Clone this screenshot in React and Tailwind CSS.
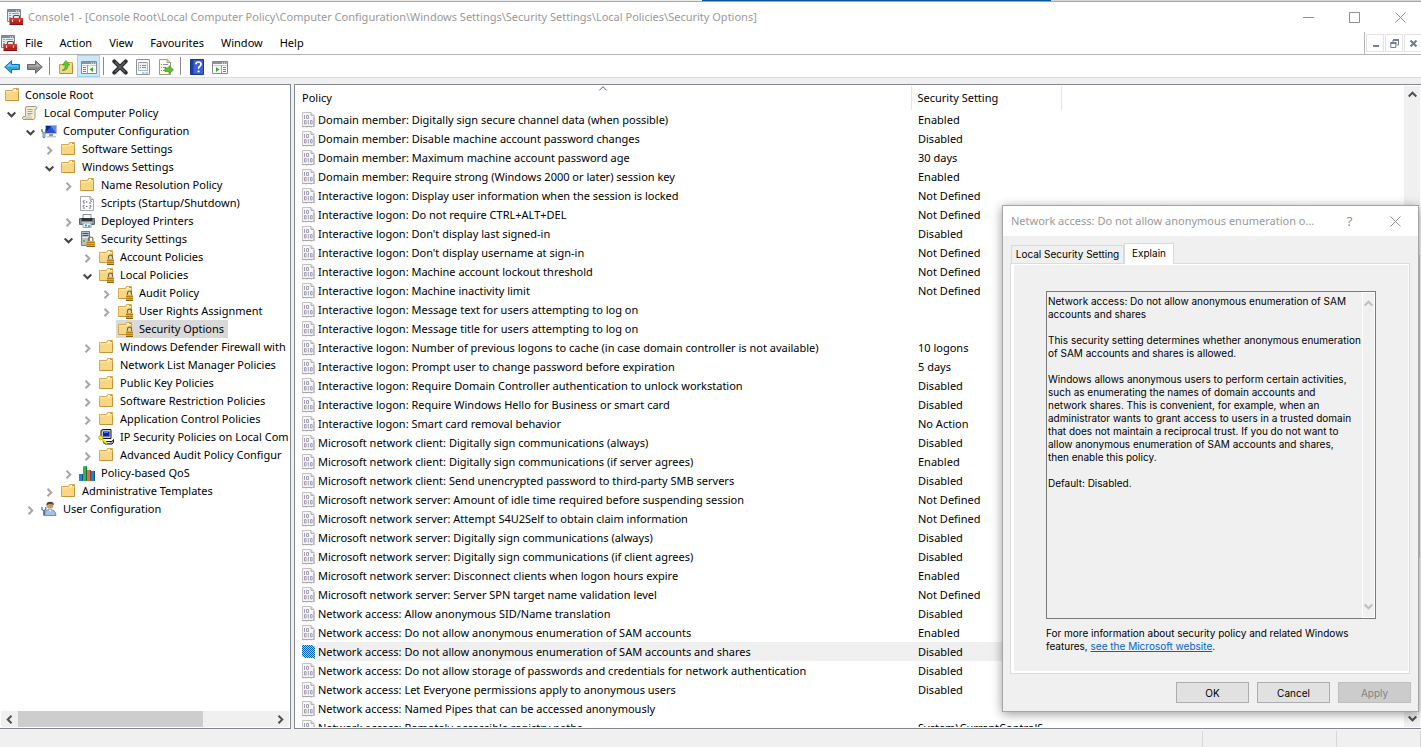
import { useState } from "react";

/* ---------- icons ---------- */

const Svg = ({ children, className = "" }) => (
  <svg viewBox="0 0 16 16" width="16" height="16" aria-hidden="true" className={"block shrink-0 " + className}>
    {children}
  </svg>
);

const ConsoleIcon = () => (
  <Svg>
    <path d="M.5.5h13v12h-13z" fill="#e6eaee" stroke="#7b8794" />
    <path d="M1 1h12v2H1z" fill="#7f8c9a" />
    <path d="M9 2h1M11 2h1" stroke="#fff" />
    <path d="M2 4.500h2M5 4.500h7M2 6.500h2M2 8.500h2" stroke="#8ea0b2" />
    <path d="M6.500 9V7.500q0-1 1-1h4q1 0 1 1V9" fill="none" stroke="#4d5358" strokeWidth="1.200" />
    <path d="M2.500 9H16v6.500H2.500z" fill="#b3221c" />
    <path d="M2.500 9H16v2.500H2.500z" fill="#cf3a32" />
    <path d="M2.500 15.500H16" stroke="#7d120e" />
    <path d="M5.500 10.500v2.500M12.500 10.500v2.500" stroke="#e3dedc" strokeWidth="1.200" />
  </Svg>
);

const FolderIcon = ({ lock }) => (
  <Svg>
    <path d="M1.500 3.500h7l1-2h5v12h-13z" fill="#f7d784" stroke="#d9a94e" />
    <path d="M2 4.500h7l1-2h4v1l-4 1.500-8 .500z" fill="#fdeebb" />
    <path d="M10.500 2.500h2" stroke="#fff" />
    <path d="M12.200 2.500h1.600" stroke="#4a9be0" />
    <path d="M2 13.500h12.500V5" fill="none" stroke="#c69537" />
    {lock && (
      <g>
        <path d="M10.500 10V8.200q0-2 2-2t2 2V10" fill="none" stroke="#6c6a5c" strokeWidth="1.200" />
        <path d="M9 10h7v5.500H9z" fill="#e3ac2a" />
        <path d="M9 11.500h7M9 13.500h7" stroke="#b67d10" />
        <path d="M9 15.500h7" stroke="#8d5e0a" />
      </g>
    )}
  </Svg>
);

const ScrollIcon = () => (
  <Svg>
    <path d="M4 1.500h9.500q1.500 0 1.500 1.500t-2 1.200V12q0 2.500-2 2.500H2q-1.500 0-1.500-1.500T2 11.500h1.500V3Q3.500 1.500 5 1.500" fill="#f3edd6" stroke="#a39c84" />
    <path d="M3 11.500h7v2.500H2.500z" fill="#d9d0b2" />
    <path d="M5.500 4.500h5M5.500 6.500h5M5.500 8.500h5M5.500 10h3" stroke="#97917c" strokeWidth=".8" />
  </Svg>
);

const ComputerIcon = () => (
  <Svg>
    <path d="M4.500 2.500h11v8h-11z" fill="#2c55c8" stroke="#b5bcc6" />
    <path d="M5 3h5l-5 6z" fill="#0a1fa3" />
    <path d="M10 3h5v7l-5-7z" fill="#5c8df0" />
    <path d="M8 11h4v2.500H8z" fill="#8f99a5" />
    <path d="M6 13h9v1.500H6z" fill="#c2c8cf" />
    <path d="M1 6v2.500l1.200 1v4.500q.8 1.500 1.600 0V9.500l1-1V6" fill="none" stroke="#4c6680" strokeWidth="1.200" />
    <path d="M2.300 9.500h1.500v5H2.300z" fill="#8ec5ea" />
  </Svg>
);

const ScriptIcon = () => (
  <Svg>
    <path d="M1.500 1.500H11l3.500 3v11h-13z" fill="#fcfcfc" stroke="#a7a9ad" />
    <path d="M11 1.500v3h3.500" fill="none" stroke="#a7a9ad" />
    <path d="M5.500 5.500Q4 5.500 4 7m7.500-1.500Q13 5.500 12 7M5.500 10.500Q3.500 10.500 4 12m6.500-1.500Q12.500 10.500 12 12M4 8h2M10 8h2M4 13h2M10 13h2" fill="none" stroke="#686b78" />
    <path d="M7 7h1.500M7 11.500h1.500" stroke="#686b78" />
  </Svg>
);

const PrinterIcon = () => (
  <Svg>
    <path d="M4 1.500h8V6H4z" fill="#f7f8f9" stroke="#8d9196" />
    <path d="M.5 5.500h15v6H.5z" fill="#8d9298" stroke="#62676c" />
    <path d="M2.500 5h11v3h-11z" fill="#2f3338" />
    <path d="M3 9.500h10" stroke="#c8ccd0" />
    <path d="M4 10h8v4.500H4z" fill="#e8f4fb" stroke="#9fa8b0" />
    <path d="M6 11.500h2v2H6z" fill="#2f8fd8" />
    <path d="M9 12h2v2H9z" fill="#57b4a6" />
  </Svg>
);

const SecurityIcon = () => (
  <Svg>
    <path d="M2.500.5h8v14h-8z" fill="#b5c2cc" stroke="#71808c" />
    <path d="M3.500 2.500h6M3.500 4.500h6" stroke="#435360" />
    <path d="M3.500 6.500h6" stroke="#e8eef2" />
    <path d="M4 9h2v2H4z" fill="#6fb53e" />
    <path d="M9.500 10V8.200q0-2 2.200-2t2.200 2V10" fill="none" stroke="#857a50" strokeWidth="1.300" />
    <path d="M7.500 10H16v5.500H7.500z" fill="#e7af2b" />
    <path d="M7.500 11.500H16M7.500 13.500H16" stroke="#b57d12" />
    <path d="M7.500 15.500H16" stroke="#8d5e0a" />
  </Svg>
);

const IpSecIcon = () => (
  <Svg>
    <path d="M3 1.500 5 .5h8v9H3z" fill="#c4c7cc" stroke="#17181a" />
    <path d="M5 2.500h6.500v5H5z" fill="#14249a" />
    <path d="M6 3.500h4" stroke="#5d77e8" />
    <path d="M5 12.500h9l1.500-2v3l-1.500 1.500H7z" fill="#a8abb0" stroke="#17181a" />
    <path d="M8 13.500h4" stroke="#eee" />
    <circle cx="2.700" cy="8.800" r="2" fill="#fff200" stroke="#a79a00" strokeWidth=".8" />
    <path d="m4 10 5 4.500" stroke="#f0df00" strokeWidth="1.800" />
    <path d="m6.500 13.500-1.300 1.300" stroke="#d8c600" strokeWidth="1.200" />
  </Svg>
);

const QosIcon = () => (
  <Svg>
    <path d="M0 9h4v7H0z" fill="#1d86d8" />
    <path d="M4 1.500 6 1h2v15H4z" fill="#35b44a" />
    <path d="M8 5h4v11H8z" fill="#ef6a3a" />
    <path d="M12 6h4v10h-4z" fill="#1f7fd0" />
    <path d="M3.500 9v6.500M7.500 2v13.500M11.500 5v10.500M15.500 6v9.500" stroke="#0d2a44" strokeOpacity=".55" />
  </Svg>
);

const UserIcon = () => (
  <Svg>
    <circle cx="9" cy="4.500" r="3.300" fill="#c99a72" />
    <path d="M5.500 4.500Q5 .8 9 .8t3.800 3.200L11 3.200 8 3z" fill="#50443a" />
    <path d="M3.500 14.500Q4 8.500 8.500 8.500q6 0 6.500 6z" fill="#9fc3ea" stroke="#6d90b8" />
    <path d="m8 8.800 1.200 2 1.300-2z" fill="#fff" />
    <path d="M1 6v2.500l1.200 1h1.600l1-1V6" fill="none" stroke="#56718c" strokeWidth="1.200" />
    <path d="M2.200 9.500h1.700v5H2.200z" fill="#3f6c9c" />
  </Svg>
);

const PolicyIcon = () => (
  <svg viewBox="0 0 13 16" width="13" height="16" aria-hidden="true" className="block shrink-0">
    <path d="M.5.500H9l3 3v11.500l-1-.8-1.500.8q-3-1.500-5 0-2-1-4 0z" fill="#f6f6f7" stroke="#c2c2c5" />
    <path d="M9 .5v3h3" fill="#dcdce0" stroke="#b2b2b6" />
    <path d="M2.500 3v4" stroke="#a29fb6" />
    <path d="M4.500 3.500h2v3h-2zM2.500 8.500h1.600v3.500H2.500zM8.500 8.500h1.600v3.500H8.500z" fill="none" stroke="#a29fb6" />
    <path d="M6.300 8v4.500" stroke="#a29fb6" />
    <path d="M.5 14.500h10M12 5v10" stroke="#a9a9ac" />
  </svg>
);

const SelectedPolicyIcon = () => (
  <svg viewBox="0 0 13 16" width="13" height="16" aria-hidden="true" className="block shrink-0">
    <defs>
      <pattern id="check" width="2" height="2" patternUnits="userSpaceOnUse">
        <path d="M0 0h2v2H0z" fill="#b4c4d2" />
        <path d="M0 0h1v1H0zM1 1h1v1H1z" fill="#0067b8" />
      </pattern>
    </defs>
    <path d="M0 1h10l3 2v12l-2-1H3l-3-2z" fill="url(#check)" />
  </svg>
);

const ArrowIcon = ({ flip, fill, stroke, shine }) => (
  <Svg>
    <g transform={flip ? "translate(16 0) scale(-1 1)" : undefined}>
      <path d="M.7 8 7.500 1.800v3.700h8v5h-8v3.700z" fill={fill} stroke={stroke} />
      <path d="M2.500 7.500 6.500 4v2.500h8v1z" fill={shine} />
    </g>
  </Svg>
);

const UpIcon = () => (
  <Svg>
    <path d="M1.500 5.500h7l1-2h5v11h-13z" fill="#f7d784" stroke="#cfa04a" />
    <path d="M2 14.500h12.500V6" fill="none" stroke="#b98a35" />
    <path d="M4 11.500Q7.500 10.500 7.500 6H4.500L8 1.500 11.500 6H10q0 5.500-6 5.500" fill="#5ccc36" stroke="#2f9a17" strokeWidth=".7" />
  </Svg>
);

const PaneIcon = ({ right }) => (
  <Svg>
    <path d="M.5 2.500h15v12H.5z" fill="#fbfbfc" stroke="#84898f" />
    <path d="M1 3h14v2H1z" fill="#8d949c" />
    <path d="M10 4h1M12 4h1M14 4h.8" stroke="#fff" />
    <path d="M1 6.500h14" stroke="#c9cdd2" />
    {right ? (
      <g>
        <path d="M9.500 6v8.500" stroke="#9da2a8" />
        <path d="M11 8.500h3M11 10.500h3M11 12.500h3" stroke="#4d87c4" />
        <path d="M4 8v5l3.500-2.500z" fill="#37ae27" />
      </g>
    ) : (
      <g>
        <path d="M6.500 6v8.500" stroke="#9da2a8" />
        <path d="M2 8.500h3M2 10.500h3M2 12.500h3" stroke="#4d87c4" />
        <path d="M12 8v5l-3.500-2.500z" fill="#37ae27" />
      </g>
    )}
  </Svg>
);

const DeleteIcon = () => (
  <Svg>
    <path d="m2.300 2.300 11.400 11.400M13.700 2.300 2.300 13.700" stroke="#2c2e31" strokeWidth="4" strokeLinecap="round" />
    <path d="m3 3 10 10M13 3 3 13" stroke="#5c6065" strokeWidth="1.500" />
  </Svg>
);

const PropertiesIcon = () => (
  <Svg>
    <path d="M1.500.5h13v15h-13z" fill="#fafafa" stroke="#8f9499" />
    <path d="M3.500 3.500h9v8h-9z" fill="#eef1f4" stroke="#b3b8bd" />
    <path d="M4 3.500h8" stroke="#8d98a6" />
    <path d="M5 6.500h1M7 6.500h4M5 8.500h1M7 8.500h4" stroke="#7d8ea6" />
    <path d="M7 14h2.500M10.500 14H13" stroke="#37b3e6" strokeWidth="1.200" />
  </Svg>
);

const ExportIcon = () => (
  <Svg>
    <path d="M1.500.5H9l3.500 3v12h-11z" fill="#fdfaea" stroke="#a39d7e" />
    <path d="M9 .5v3h3.500" fill="none" stroke="#a39d7e" />
    <path d="M3 5.500h1M5 5.500h5M3 8.500h1M5 8.500h3M3 11.500h1M5 11.500h3" stroke="#8c8c86" />
    <path d="M7 9h4V6.800l4.500 4-4.500 4V12.500H7z" fill="#53c832" stroke="#37981c" strokeWidth=".7" />
  </Svg>
);

const HelpIcon = () => (
  <Svg>
    <path d="M1.500.5h13v15h-13z" fill="#3b62cf" stroke="#1c3688" />
    <path d="M2 1h2.500v14H2z" fill="#1f3da0" />
    <path d="M7 5.300Q7 3 9.500 3T12 5.200q0 1.500-1.500 2.300-1 .6-1 2.300" fill="none" stroke="#fff" strokeWidth="1.700" />
    <path d="M8.600 11.500h1.900v1.800H8.600z" fill="#fff" />
  </Svg>
);

const Chevron = ({ d, color = "#505050", w = 9, h = 9, sw = 2 }) => (
  <svg viewBox="0 0 9 9" width={w} height={h} aria-hidden="true" className="block shrink-0">
    <path d={d} fill="none" stroke={color} strokeWidth={sw} />
  </svg>
);
const DOWN = "M.7 2.500 4.500 6.300 8.300 2.500";
const UP = "M.7 6.500 4.500 2.700 8.300 6.500";
const LEFT = "M6.500.7 2.700 4.500 6.500 8.300";
const RIGHT = "M2.500.7 6.300 4.500 2.500 8.300";

/* ---------- data ---------- */

const TREE = [
  [0, "", FolderIcon, "Console Root"],
  [1, "open", ScrollIcon, "Local Computer Policy"],
  [2, "open", ComputerIcon, "Computer Configuration"],
  [3, "closed", FolderIcon, "Software Settings"],
  [3, "open", FolderIcon, "Windows Settings"],
  [4, "closed", FolderIcon, "Name Resolution Policy"],
  [4, "", ScriptIcon, "Scripts (Startup/Shutdown)"],
  [4, "closed", PrinterIcon, "Deployed Printers"],
  [4, "open", SecurityIcon, "Security Settings"],
  [5, "closed", FolderIcon, "Account Policies", true],
  [5, "open", FolderIcon, "Local Policies", true],
  [6, "closed", FolderIcon, "Audit Policy", true],
  [6, "closed", FolderIcon, "User Rights Assignment", true],
  [6, "", FolderIcon, "Security Options", true],
  [5, "closed", FolderIcon, "Windows Defender Firewall with"],
  [5, "", FolderIcon, "Network List Manager Policies"],
  [5, "closed", FolderIcon, "Public Key Policies"],
  [5, "closed", FolderIcon, "Software Restriction Policies"],
  [5, "closed", FolderIcon, "Application Control Policies"],
  [5, "closed", IpSecIcon, "IP Security Policies on Local Com"],
  [5, "closed", FolderIcon, "Advanced Audit Policy Configur"],
  [4, "closed", QosIcon, "Policy-based QoS"],
  [3, "closed", FolderIcon, "Administrative Templates"],
  [2, "closed", UserIcon, "User Configuration"],
];

const INDENT = ["pl-1", "pl-1", "pl-[23px]", "pl-[42px]", "pl-[61px]", "pl-20", "pl-[99px]"];

const POLICIES = [
  ["Domain member: Digitally sign secure channel data (when possible)", "Enabled"],
  ["Domain member: Disable machine account password changes", "Disabled"],
  ["Domain member: Maximum machine account password age", "30 days"],
  ["Domain member: Require strong (Windows 2000 or later) session key", "Enabled"],
  ["Interactive logon: Display user information when the session is locked", "Not Defined"],
  ["Interactive logon: Do not require CTRL+ALT+DEL", "Not Defined"],
  ["Interactive logon: Don't display last signed-in", "Disabled"],
  ["Interactive logon: Don't display username at sign-in", "Not Defined"],
  ["Interactive logon: Machine account lockout threshold", "Not Defined"],
  ["Interactive logon: Machine inactivity limit", "Not Defined"],
  ["Interactive logon: Message text for users attempting to log on", ""],
  ["Interactive logon: Message title for users attempting to log on", ""],
  ["Interactive logon: Number of previous logons to cache (in case domain controller is not available)", "10 logons"],
  ["Interactive logon: Prompt user to change password before expiration", "5 days"],
  ["Interactive logon: Require Domain Controller authentication to unlock workstation", "Disabled"],
  ["Interactive logon: Require Windows Hello for Business or smart card", "Disabled"],
  ["Interactive logon: Smart card removal behavior", "No Action"],
  ["Microsoft network client: Digitally sign communications (always)", "Disabled"],
  ["Microsoft network client: Digitally sign communications (if server agrees)", "Enabled"],
  ["Microsoft network client: Send unencrypted password to third-party SMB servers", "Disabled"],
  ["Microsoft network server: Amount of idle time required before suspending session", "Not Defined"],
  ["Microsoft network server: Attempt S4U2Self to obtain claim information", "Not Defined"],
  ["Microsoft network server: Digitally sign communications (always)", "Disabled"],
  ["Microsoft network server: Digitally sign communications (if client agrees)", "Disabled"],
  ["Microsoft network server: Disconnect clients when logon hours expire", "Enabled"],
  ["Microsoft network server: Server SPN target name validation level", "Not Defined"],
  ["Network access: Allow anonymous SID/Name translation", "Disabled"],
  ["Network access: Do not allow anonymous enumeration of SAM accounts", "Enabled"],
  ["Network access: Do not allow anonymous enumeration of SAM accounts and shares", "Disabled"],
  ["Network access: Do not allow storage of passwords and credentials for network authentication", "Disabled"],
  ["Network access: Let Everyone permissions apply to anonymous users", "Disabled"],
  ["Network access: Named Pipes that can be accessed anonymously", ""],
  ["Network access: Remotely accessible registry paths", "System\\CurrentControlS..."],
];
const SELECTED = 28;

const EXPLANATION = `Network access: Do not allow anonymous enumeration of SAM
accounts and shares

This security setting determines whether anonymous enumeration
of SAM accounts and shares is allowed.

Windows allows anonymous users to perform certain activities,
such as enumerating the names of domain accounts and
network shares. This is convenient, for example, when an
administrator wants to grant access to users in a trusted domain
that does not maintain a reciprocal trust. If you do not want to
allow anonymous enumeration of SAM accounts and shares,
then enable this policy.

Default: Disabled.`;

/* ---------- window parts ---------- */

const MinGlyph = () => (
  <svg width="11" height="11" aria-hidden="true"><path d="M0 5.500h11" stroke="#8f8f8f" /></svg>
);
const MaxGlyph = () => (
  <svg width="11" height="11" aria-hidden="true"><path d="M.5.5h10v10H.5z" fill="none" stroke="#8f8f8f" /></svg>
);
const CloseGlyph = () => (
  <svg width="11" height="11" aria-hidden="true"><path d="m.5.500 10 10M10.500.5l-10 10" stroke="#8f8f8f" /></svg>
);

const CaptionButton = ({ label, children }) => (
  <button type="button" aria-label={label} className="flex h-full w-[46px] items-center justify-center">
    {children}
  </button>
);

function TitleBar() {
  return (
    <header className="flex h-[30px] shrink-0 items-center bg-white pl-[7px]">
      <ConsoleIcon />
      <h1 className="ml-[5px] flex-1 truncate text-[#999999]">
        Console1 - [Console Root\Local Computer Policy\Computer Configuration\Windows Settings\Security Settings\Local Policies\Security Options]
      </h1>
      <div className="-mr-0.5 flex h-full">
        <CaptionButton label="Minimise"><MinGlyph /></CaptionButton>
        <CaptionButton label="Maximise"><MaxGlyph /></CaptionButton>
        <CaptionButton label="Close"><CloseGlyph /></CaptionButton>
      </div>
    </header>
  );
}

const MdiButton = ({ label, children }) => (
  <button type="button" aria-label={label} className="flex h-[18px] w-[18px] items-center justify-center border border-[#e3e3e3]">
    <svg width="9" height="9" aria-hidden="true">{children}</svg>
  </button>
);

function MenuBar() {
  const items = ["File", "Action", "View", "Favourites", "Window", "Help"];
  return (
    <nav className="flex h-[23px] shrink-0 items-center border-b border-[#b4b4b4] bg-white pl-px">
      <ConsoleIcon />
      <div className="flex flex-1">
        {items.map((m) => (
          <button key={m} type="button" className="pl-2 pr-[9px]">{m}</button>
        ))}
      </div>
      <div className="-mr-px flex h-full items-center gap-px border-l border-[#b4b4b4] pl-px">
        <MdiButton label="Minimise child window"><path d="M2 6h6v2H2z" fill="#74808d" /></MdiButton>
        <MdiButton label="Restore child window">
          <path d="M3 3V1h5.500v5H6.500M.8 3.500h5v5h-5z" fill="none" stroke="#74808d" />
          <path d="M3 1h6M.5 4h6" stroke="#74808d" strokeWidth="2" />
        </MdiButton>
        <MdiButton label="Close child window"><path d="m1.500 1.500 6 6M7.500 1.500l-6 6" stroke="#74808d" strokeWidth="2.200" /></MdiButton>
      </div>
    </nav>
  );
}

const ToolButton = ({ label, active, children }) => (
  <button
    type="button"
    aria-label={label}
    className={
      "flex h-[22px] w-[23px] items-center justify-center border pt-px " +
      (active ? "border-[#99d1ff] bg-[#cce8ff]" : "border-transparent")
    }
  >
    {children}
  </button>
);
const ToolSeparator = () => <div className="ml-[3px] mr-1 h-[18px] w-px bg-[#8b8b8b]" />;

function ToolBar() {
  return (
    <div className="flex h-[23px] shrink-0 items-center border-b border-[#dcdcdc] bg-white">
      <ToolButton label="Back"><ArrowIcon fill="#2ea3ea" stroke="#1672b5" shine="#86d1f8" /></ToolButton>
      <ToolButton label="Forward"><ArrowIcon flip fill="#8b8b8b" stroke="#666666" shine="#bcbcbc" /></ToolButton>
      <ToolSeparator />
      <ToolButton label="Up one level"><UpIcon /></ToolButton>
      <ToolButton label="Show or hide console tree" active><PaneIcon /></ToolButton>
      <ToolSeparator />
      <ToolButton label="Delete"><DeleteIcon /></ToolButton>
      <ToolButton label="Properties"><PropertiesIcon /></ToolButton>
      <ToolButton label="Export list"><ExportIcon /></ToolButton>
      <ToolSeparator />
      <ToolButton label="Help"><HelpIcon /></ToolButton>
      <ToolButton label="Show or hide action pane"><PaneIcon right /></ToolButton>
    </div>
  );
}

function TreePane() {
  const [current, setCurrent] = useState("Security Options");
  return (
    <aside className="flex w-[291px] shrink-0 flex-col border-y border-r border-[#828790] bg-white">
      <ul role="tree" className="flex-1 pr-px pt-px">
        {TREE.map(([level, state, Icon, label, lock]) => (
          <li key={label} role="treeitem" aria-selected={current === label} className={"flex h-[18px] items-center " + INDENT[level]}>
            {level > 0 && (
              <span className="flex w-[17px] shrink-0 items-center pl-[3px] pt-0.5">
                {state === "open" && <Chevron d={DOWN} color="#444444" />}
                {state === "closed" && <Chevron d={RIGHT} color="#a6a6a6" />}
              </span>
            )}
            <button
              type="button"
              onClick={() => setCurrent(label)}
              className={
                "flex h-[18px] items-center whitespace-nowrap text-left " +
                (level > 0 ? "gap-1.5 pl-px " : "gap-[5px] ") +
                (current === label ? "bg-[#d9d9d9] pr-1" : "")
              }
            >
              <Icon lock={lock} />
              <span>{label}</span>
            </button>
          </li>
        ))}
      </ul>
      <div className="mb-px ml-px mr-px flex h-4 items-center bg-[#f0f0f0]">
        <div className="flex w-[17px] justify-center"><Chevron d={LEFT} /></div>
        <div className="flex h-full flex-1">
          <div className="h-full w-[73%] bg-[#cdcdcd]" />
        </div>
        <div className="flex w-[17px] justify-center"><Chevron d={RIGHT} /></div>
      </div>
    </aside>
  );
}

function PolicyPane() {
  return (
    <main className="flex min-w-0 flex-1 border-y border-l border-[#828790] bg-white p-px">
      <div className="min-h-0 min-w-0 flex-1 overflow-hidden">
        <table className="w-full table-fixed border-collapse">
          <colgroup>
            <col className="w-[615px]" />
            <col className="w-[150px]" />
            <col />
          </colgroup>
          <thead>
            <tr className="h-6 text-left">
              <th scope="col" className="relative border-r border-[#e5e5e5] p-0 pl-1.5 font-normal">
                Policy
                <span className="absolute -top-0.5 left-1/2 -translate-x-1/2">
                  <Chevron d={UP} color="#606060" sw={1} />
                </span>
              </th>
              <th scope="col" className="border-r border-[#e5e5e5] p-0 pl-1.5 font-normal">Security Setting</th>
              <td className="p-0" />
            </tr>
          </thead>
          <tbody>
            {POLICIES.map(([name, value], i) => {
              const bg = i === SELECTED ? "bg-[#f0f0f0]" : "";
              return (
                <tr key={name} className="h-[19px]">
                  <td className="p-0 pl-1.5">
                    <div className="flex h-[19px] items-center gap-px">
                      {i === SELECTED ? <SelectedPolicyIcon /> : <PolicyIcon />}
                      <span className={"h-[19px] flex-1 truncate pl-0.5 leading-[19px] " + bg}>{name}</span>
                    </div>
                  </td>
                  <td className={"p-0 " + bg}>
                    <div className="whitespace-nowrap pl-[7px] leading-[19px]">{value}</div>
                  </td>
                  <td className="p-0" />
                </tr>
              );
            })}
          </tbody>
        </table>
      </div>
      <div className="flex w-4 shrink-0 flex-col items-center bg-[#f0f0f0]">
        <div className="flex h-[17px] items-center"><Chevron d={UP} /></div>
        <div className="flex w-full flex-1 flex-col">
          <div className="flex-1" />
          <div className="w-full flex-[2] bg-[#cdcdcd]" />
          <div className="flex-1" />
        </div>
        <div className="flex h-[17px] items-center"><Chevron d={DOWN} /></div>
      </div>
    </main>
  );
}

const DialogButton = ({ children, disabled }) => (
  <button
    type="button"
    disabled={disabled}
    className={
      "h-[21px] w-[73px] border " +
      (disabled ? "border-[#bfbfbf] bg-[#cccccc] text-[#838383]" : "border-[#adadad] bg-[#e1e1e1]")
    }
  >
    {children}
  </button>
);

function PolicyDialog() {
  return (
    <section
      role="dialog"
      aria-labelledby="dialog-title"
      className="absolute right-[2px] top-[205px] w-[417px] border border-[#a5a5a5] bg-[#f0f0f0] pb-2 shadow-[0_2px_10px_rgba(0,0,0,0.4)]"
    >
      <header className="flex h-[30px] items-center bg-white pl-2">
        <h2 id="dialog-title" className="flex-1 truncate text-[#999999]">
          Network access: Do not allow anonymous enumeration o...
        </h2>
        <button type="button" aria-label="Help" className="h-full w-[45px] text-[13px] text-[#8f8f8f]">?</button>
        <button type="button" aria-label="Close" className="flex h-full w-[46px] items-center justify-center"><CloseGlyph /></button>
      </header>

      <div className="pl-[7px] pr-2 pt-[7px] font-['Inter',sans-serif] text-[10px] leading-[13px]">
        <div role="tablist" className="flex items-end pl-px">
          <button type="button" role="tab" aria-selected="false" className="h-[18px] w-[113px] border border-b-0 border-[#d9d9d9]">
            Local Security Setting
          </button>
          <button type="button" role="tab" aria-selected="true" className="-mb-px h-[21px] w-[50px] border border-b-0 border-[#d9d9d9] bg-white pb-0.5">
            Explain
          </button>
        </div>

        <div role="tabpanel" className="border border-[#dcdcdc] bg-white pb-0.5 pl-[3px] pr-px pt-px">
          <div className="bg-[#f0f0f0] px-8 pb-[18px] pt-[26px]">
            <div className="flex h-[328px] border border-[#7a7a7a]">
              <textarea
                readOnly
                aria-label="Explanation"
                value={EXPLANATION}
                className="block h-full min-w-0 flex-1 resize-none overflow-hidden whitespace-pre bg-transparent pl-px pt-[3px] outline-none"
              />
              <div className="flex w-[13px] shrink-0 flex-col items-center justify-between border border-white py-1.5">
                <Chevron d={UP} color="#bfbfbf" />
                <Chevron d={DOWN} color="#bfbfbf" />
              </div>
            </div>
            <p className="mt-2 whitespace-nowrap">
              For more information about security policy and related Windows
              <br />
              features,{" "}
              <a href="#microsoft" className="text-[#0066cc] underline">see the Microsoft website</a>.
            </p>
          </div>
        </div>
      </div>

      <div className="flex justify-end gap-2 pr-[7px] pt-2 font-['Inter',sans-serif] text-[10px]">
        <DialogButton>OK</DialogButton>
        <DialogButton>Cancel</DialogButton>
        <DialogButton disabled>Apply</DialogButton>
      </div>
    </section>
  );
}

export default function App() {
  return (
    <div className="relative flex h-screen flex-col overflow-hidden bg-[#f0f0f0] font-['Noto_Sans','Segoe_UI',sans-serif] text-[11px] leading-4 text-black">
      <div className="flex h-[2px] shrink-0 border-b border-[#a9a9a9]">
        <div className="flex-[702] bg-[#ececec]" />
        <div className="flex-[349] bg-[#0a5496]" />
        <div className="flex-[370] bg-[#d5d5d5]" />
      </div>
      <TitleBar />
      <MenuBar />
      <ToolBar />
      <div className="mt-1.5 flex min-h-0 flex-1 gap-[3px]">
        <TreePane />
        <PolicyPane />
      </div>
      <footer className="flex h-[18px] shrink-0 justify-end pt-0.5">
        <div className="w-[134px] border-l border-[#d7d7d7]" />
        <div className="w-[85px] border-x border-[#d7d7d7]" />
      </footer>
      <PolicyDialog />
    </div>
  );
}
